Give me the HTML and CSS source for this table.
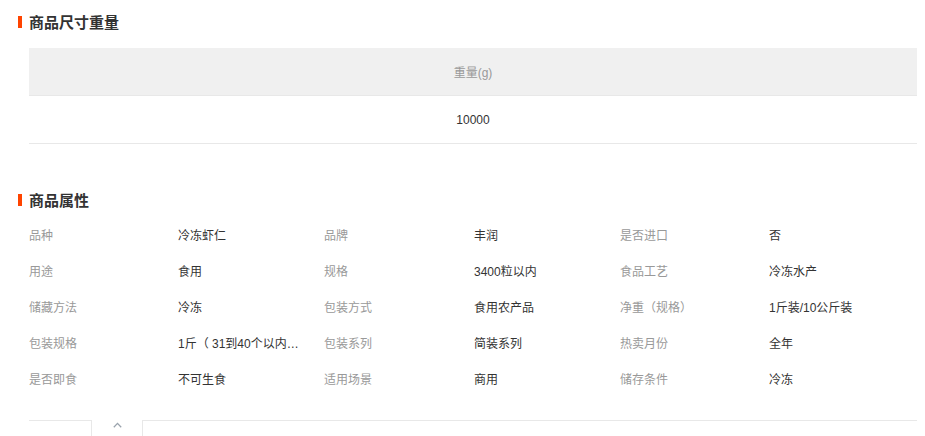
FILE: index.html
```html
<!DOCTYPE html>
<html lang="zh-CN">
<head>
<meta charset="utf-8">
<title>商品属性</title>
<link rel="stylesheet" href="styles.css">
</head>
<body>
<div class="page">
  <h2 class="title title-first"><span class="bar"></span>商品尺寸重量</h2>
  <table class="size-table">
    <thead><tr><th>重量(g)</th></tr></thead>
    <tbody><tr><td>10000</td></tr></tbody>
  </table>

  <h2 class="title title-second"><span class="bar"></span>商品属性</h2>
  <div class="attrs">
    <div class="label">品种</div><div class="value">冷冻虾仁</div>
    <div class="label">品牌</div><div class="value">丰润</div>
    <div class="label">是否进口</div><div class="value">否</div>

    <div class="label">用途</div><div class="value">食用</div>
    <div class="label">规格</div><div class="value">3400粒以内</div>
    <div class="label">食品工艺</div><div class="value">冷冻水产</div>

    <div class="label">储藏方法</div><div class="value">冷冻</div>
    <div class="label">包装方式</div><div class="value">食用农产品</div>
    <div class="label">净重（规格）</div><div class="value">1斤装/10公斤装</div>

    <div class="label">包装规格</div><div class="value">1斤（ 31到40个以内…</div>
    <div class="label">包装系列</div><div class="value">简装系列</div>
    <div class="label">热卖月份</div><div class="value">全年</div>

    <div class="label">是否即食</div><div class="value">不可生食</div>
    <div class="label">适用场景</div><div class="value">商用</div>
    <div class="label">储存条件</div><div class="value">冷冻</div>
  </div>

  <div class="fold">
    <div class="fold-line fold-left"></div>
    <div class="fold-tab">
      <svg width="9" height="6" viewBox="0 0 9 6" aria-hidden="true"><path d="M0.8 5.2 L4.5 1.4 L8.2 5.2" fill="none" stroke="#9aa3ad" stroke-width="1.3"/></svg>
    </div>
    <div class="fold-line fold-right"></div>
  </div>
</div>
</body>
</html>
```

FILE: styles.css
```css
html, body {
  margin: 0;
  padding: 0;
  background: #fff;
}

body {
  font-family: "Liberation Sans", Arial, "Noto Sans CJK SC", sans-serif;
  font-size: 12px;
  color: #333;
}

.page {
  width: 899px;
  padding: 0 8px 0 18px;
}

.title {
  display: flex;
  align-items: center;
  gap: 7px;
  height: 20px;
  margin: 0;
  font-size: 15px;
  font-weight: bold;
  color: #333;
  line-height: 20px;
  font-family: "Noto Sans CJK SC", sans-serif;
}

.title-first {
  margin-top: 12px;
}

.title-second {
  margin-top: 46px;
}

.bar {
  display: block;
  width: 4px;
  height: 12px;
  background: #ff4400;
}

.size-table {
  margin: 16px 0 0 11px;
  width: 888px;
  border-collapse: collapse;
}

.size-table th,
.size-table td {
  height: 47px;
  padding: 0;
  text-align: center;
  border-bottom: 1px solid #e8e8e8;
  font-weight: normal;
}

.size-table th {
  background: #f0f0f0;
  color: #999;
}

.size-table td {
  color: #333;
}

.attrs {
  margin: 6px 0 0 11px;
  display: grid;
  grid-template-columns: 149px 146px 150px 146px 149px 148px;
  grid-auto-rows: 36px;
  align-items: center;
  width: 888px;
}

.label {
  color: #999;
  white-space: nowrap;
}

.value {
  color: #333;
  white-space: nowrap;
}

.fold {
  display: flex;
  margin: 24px 0 0 11px;
  width: 888px;
  height: 16px;
}

.fold-line {
  border-top: 1px solid #e8e8e8;
}

.fold-left {
  width: 62px;
}

.fold-right {
  flex: 1;
}

.fold-tab {
  width: 50px;
  border-left: 1px solid #e8e8e8;
  border-right: 1px solid #e8e8e8;
  display: flex;
  justify-content: center;
  padding-top: 2px;
}

.fold-tab svg {
  display: block;
}
```
